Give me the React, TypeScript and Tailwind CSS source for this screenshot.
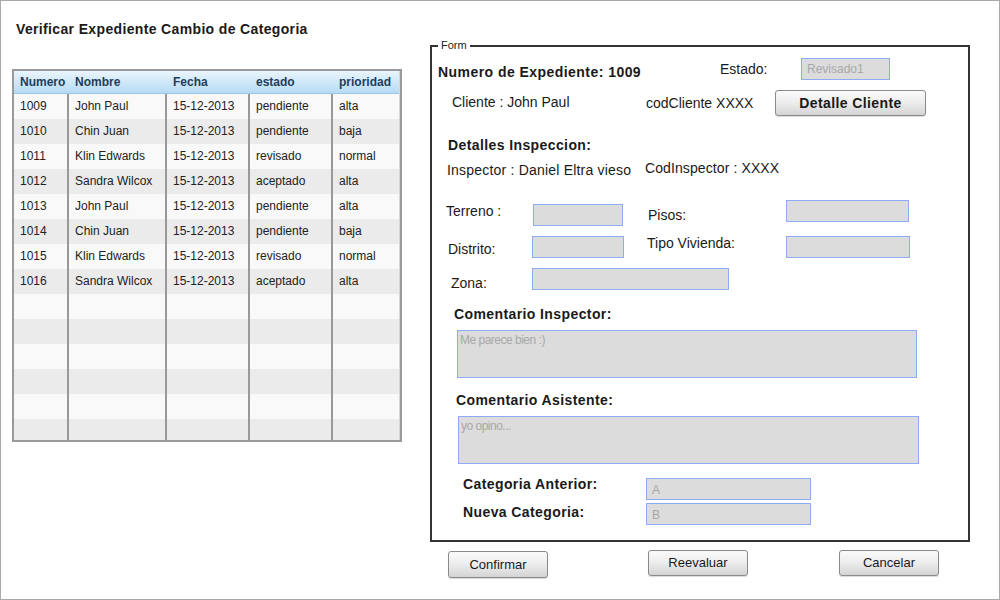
import type { ReactNode } from "react";

const rows = [
  ["1009", "John Paul", "15-12-2013", "pendiente", "alta"],
  ["1010", "Chin Juan", "15-12-2013", "pendiente", "baja"],
  ["1011", "Klin Edwards", "15-12-2013", "revisado", "normal"],
  ["1012", "Sandra Wilcox", "15-12-2013", "aceptado", "alta"],
  ["1013", "John Paul", "15-12-2013", "pendiente", "alta"],
  ["1014", "Chin Juan", "15-12-2013", "pendiente", "baja"],
  ["1015", "Klin Edwards", "15-12-2013", "revisado", "normal"],
  ["1016", "Sandra Wilcox", "15-12-2013", "aceptado", "alta"],
];

const colWidths = ["w-[55px]", "w-[98px]", "w-[83px]", "w-[83px]", "flex-1"];
const headers = ["Numero", "Nombre", "Fecha", "estado", "prioridad"];

function Field({ className, value }: { className: string; value?: string }) {
  return (
    <div
      className={`h-[22px] shrink-0 border border-[#8eacf2] bg-[#dcdcdc] px-[5px] text-[12px] leading-[20px] text-[#a8a8a8] ${className}`}
    >
      {value}
    </div>
  );
}

function Button({
  className,
  bold,
  children,
}: {
  className: string;
  bold?: boolean;
  children: ReactNode;
}) {
  return (
    <button
      className={`shrink-0 rounded-[3px] border border-[#8a8a8a] bg-linear-to-b from-[#fbfbfb] via-[#ececec] to-[#d4d4d4] text-[#1a1a1a] shadow-[0_1px_1px_rgba(0,0,0,0.15)] ${
        bold ? "text-[14px] font-bold tracking-[0.4px]" : "text-[13px]"
      } ${className}`}
    >
      {children}
    </button>
  );
}

function DataTable() {
  const allRows = [...rows, ...Array.from({ length: 6 }, () => ["", "", "", "", ""])];
  return (
    <div className="mt-[32px] h-[373px] w-[390px] overflow-hidden border-2 border-[#9a9a9a]">
      <div className="h-full border-r border-b border-[#d6d6d6]">
        <div className="flex h-[23px] border-b border-[#9ec6e4] bg-linear-to-b from-[#eaf5fd] to-[#b6dbf4]">
          {headers.map((h, i) => (
            <div
              key={h}
              className={`${colWidths[i]} pl-[6px] text-[12px] font-bold leading-[22px] text-[#1f3d5c]`}
            >
              {h}
            </div>
          ))}
        </div>
        {allRows.map((r, ri) => (
          <div
            key={ri}
            className={`flex h-[25px] ${ri % 2 === 0 ? "bg-[#f9f9f9]" : "bg-[#ebebeb]"}`}
          >
            {r.map((c, ci) => (
              <div
                key={ci}
                className={`${colWidths[ci]} ${
                  ci < 4 ? "border-r-2 border-[#999999]" : ""
                } pl-[6px] text-[12px] leading-[25px] text-[#222]`}
              >
                {c}
              </div>
            ))}
          </div>
        ))}
      </div>
    </div>
  );
}

export default function App() {
  return (
    <div
      className="flex h-[600px] w-[1000px] border border-[#a9a9a9] bg-white text-[14px] leading-[16px] text-[#1a1a1a]"
      style={{ fontFamily: '"Liberation Sans", Arial, sans-serif' }}
    >
      {/* left: title + list */}
      <div className="w-[429px] shrink-0 pl-[11px] pt-[20px]">
        <div className="ml-[4px] h-[16px] text-[14px] font-bold tracking-[0.35px]">
          Verificar Expediente Cambio de Categoria
        </div>
        <DataTable />
      </div>

      {/* right: form */}
      <div className="flex flex-col pt-[44px]">
        <div className="relative h-[497px] w-[540px] border-2 border-[#333]">
          <div className="absolute left-[6px] top-[-8px] bg-white px-[3px] text-[11px] leading-[12px] text-[#222]">
            Form
          </div>

          <div className="flex h-[43px] items-start">
            <div className="ml-[6px] mt-[17px] w-[282px] shrink-0 font-bold tracking-[0.45px]">
              Numero de Expediente: 1009
            </div>
            <div className="mt-[14px] w-[81px] shrink-0">Estado:</div>
            <Field className="mt-[11px] w-[89px]" value="Revisado1" />
          </div>

          <div className="flex h-[47px] items-start">
            <div className="ml-[20px] mt-[4px] w-[194px] shrink-0">Cliente : John Paul</div>
            <div className="mt-[5px] w-[129px] shrink-0">codCliente XXXX</div>
            <Button className="h-[26px] w-[151px]" bold>
              Detalle Cliente
            </Button>
          </div>

          <div className="h-[23px]">
            <div className="ml-[16px] font-bold tracking-[0.4px]">Detalles Inspeccion:</div>
          </div>

          <div className="flex h-[40px] items-start">
            <div className="ml-[15px] mt-[2px] w-[198px] shrink-0 tracking-[0.2px]">
              Inspector : Daniel Eltra vieso
            </div>
            <div className="tracking-[0.1px]">CodInspector : XXXX</div>
          </div>

          <div className="flex h-[35px] items-start">
            <div className="ml-[14px] mt-[3px] w-[87px] shrink-0">Terreno :</div>
            <Field className="mt-[4px] w-[90px]" />
            <div className="ml-[25px] mt-[7px] w-[138px] shrink-0">Pisos:</div>
            <Field className="w-[123px]" />
          </div>

          <div className="flex h-[33px] items-start">
            <div className="ml-[16px] mt-[6px] w-[84px] shrink-0">Distrito:</div>
            <Field className="mt-[1px] w-[92px]" />
            <div className="ml-[23px] mt-0 w-[139px] shrink-0">Tipo Vivienda:</div>
            <Field className="mt-[1px] w-[124px]" />
          </div>

          <div className="flex h-[38px] items-start">
            <div className="ml-[19px] mt-[7px] w-[81px] shrink-0">Zona:</div>
            <Field className="w-[197px]" />
          </div>

          <div className="h-[24px]">
            <div className="ml-[22px] font-bold tracking-[0.4px]">Comentario Inspector:</div>
          </div>
          <div className="h-[62px]">
            <Field
              className="ml-[25px] !h-[48px] w-[460px] !px-[2px] tracking-[-0.5px] !leading-[18px]"
              value="Me parece bien :)"
            />
          </div>

          <div className="h-[24px]">
            <div className="ml-[24px] font-bold tracking-[0.4px]">Comentario Asistente:</div>
          </div>
          <div className="h-[60px]">
            <Field
              className="ml-[26px] !h-[48px] w-[461px] !px-[2px] tracking-[-0.5px] !leading-[18px]"
              value="yo opino..."
            />
          </div>

          <div className="flex h-[27px] items-start">
            <div className="ml-[31px] w-[183px] shrink-0 font-bold tracking-[0.4px]">
              Categoria Anterior:
            </div>
            <Field className="mt-[2px] w-[165px] !leading-[22px]" value="A" />
          </div>
          <div className="flex items-start">
            <div className="ml-[31px] mt-[1px] w-[183px] shrink-0 font-bold tracking-[0.4px]">
              Nueva Categoria:
            </div>
            <Field className="w-[165px] !leading-[22px]" value="B" />
          </div>
        </div>

        <div className="flex items-start">
          <Button className="ml-[18px] mt-[9px] h-[27px] w-[100px]">Confirmar</Button>
          <Button className="ml-[100px] mt-[8px] h-[26px] w-[100px]">Reevaluar</Button>
          <Button className="ml-[91px] mt-[8px] h-[26px] w-[100px]">Cancelar</Button>
        </div>
      </div>
    </div>
  );
}
